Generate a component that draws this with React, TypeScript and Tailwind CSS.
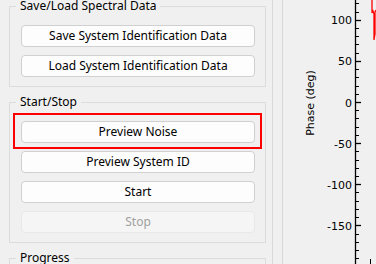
import React from "react";

const UI_FONT = { fontFamily: '"Noto Sans", "DejaVu Sans", sans-serif' };

function Btn({ label, disabled }: { label: string; disabled?: boolean }) {
  return (
    <div
      className={
        "h-[22px] w-full rounded-[4px] border flex items-center justify-center text-[12px] leading-none " +
        (disabled
          ? "bg-[#f5f5f5] border-[#e8e8e8] text-[#a0a0a0]"
          : "bg-[#fdfdfd] border-[#d0d0d0] text-black")
      }
    >
      {label}
    </div>
  );
}

function Group({
  title,
  children,
  className,
}: {
  title: string;
  children?: React.ReactNode;
  className?: string;
}) {
  return (
    <fieldset
      className={
        "ml-[9px] w-[257px] border border-[#dcdcdc] pl-[11px] pr-[10px] pb-[9px] " +
        (className ?? "")
      }
    >
      <legend className="ml-[-5px] px-[4px] text-[12px] leading-[12px] text-black">
        {title}
      </legend>
      {children}
    </fieldset>
  );
}

function Plot() {
  const vals = [100, 50, 0, -50, -100, -150];
  const y = (v: number) => 102 - v * 0.822;
  const minors: number[] = [];
  for (let v = 140; v >= -200; v -= 10) {
    if (v % 50 !== 0) minors.push(v);
  }
  const ox = 283;
  return (
    <svg width={93} height={264} className="block" style={{ fontFamily: '"DejaVu Sans", sans-serif' }}>
      <line x1={355.5 - ox} y1={0} x2={355.5 - ox} y2={264} stroke="#000" strokeWidth={1.3} />
      {vals.map((v) => (
        <g key={v}>
          <line x1={355 - ox} y1={Math.round(y(v)) + 0.5} x2={361 - ox} y2={Math.round(y(v)) + 0.5} stroke="#000" strokeWidth={1.3} />
          <text x={352 - ox} y={y(v) + 4.5} textAnchor="end" fontSize={11} fill="#000">
            {v}
          </text>
        </g>
      ))}
      {minors.map((v) => (
        <line key={v} x1={355 - ox} y1={Math.round(y(v)) + 0.5} x2={359 - ox} y2={Math.round(y(v)) + 0.5} stroke="#000" strokeWidth={1} />
      ))}
      <line x1={370.5 - ox} y1={259} x2={370.5 - ox} y2={264} stroke="#000" strokeWidth={1} />
      <text
        x={310 - ox}
        y={103}
        transform={`rotate(-90 ${310 - ox} 103)`}
        textAnchor="middle"
        dominantBaseline="central"
        fontSize={11}
        fill="#000"
      >
        Phase (deg)
      </text>
      <path
        d={`M${372 - ox} 0 L${372 - ox} 13 L${373 - ox} 11 L${374 - ox} 14 L${374 - ox} 40 L${375 - ox} 34 L${375 - ox} 12 L${376 - ox} 10`}
        fill="none"
        stroke="#ff0000"
        strokeWidth={1.3}
      />
    </svg>
  );
}

export default function App() {
  return (
    <div className="w-[376px] h-[264px] bg-[#f0f0f0] overflow-hidden flex" style={UI_FONT}>
      <div className="w-[273px] h-full border-r border-[#d8d8d8] shrink-0">
        <Group title="Save/Load Spectral Data">
          <div className="mt-[13px] flex flex-col gap-[8px]">
            <Btn label="Save System Identification Data" />
            <Btn label="Load System Identification Data" />
          </div>
        </Group>
        <Group title="Start/Stop" className="mt-[9px]">
          <div className="mt-[13px] flex flex-col gap-[8px]">
            <div className="relative">
              <Btn label="Preview Noise" />
              <div className="absolute -left-[8px] -right-[7px] -top-[8px] -bottom-[6px] border-2 border-[#ff0000] pointer-events-none" />
            </div>
            <Btn label="Preview System ID" />
            <Btn label="Start" />
            <Btn label="Stop" disabled />
          </div>
        </Group>
        <Group title="Progress" className="mt-[9px] h-[40px]" />
      </div>
      <div className="w-[9px] shrink-0" />
      <div className="h-full border-l border-[#d8d8d8] flex-1">
        <Plot />
      </div>
    </div>
  );
}
